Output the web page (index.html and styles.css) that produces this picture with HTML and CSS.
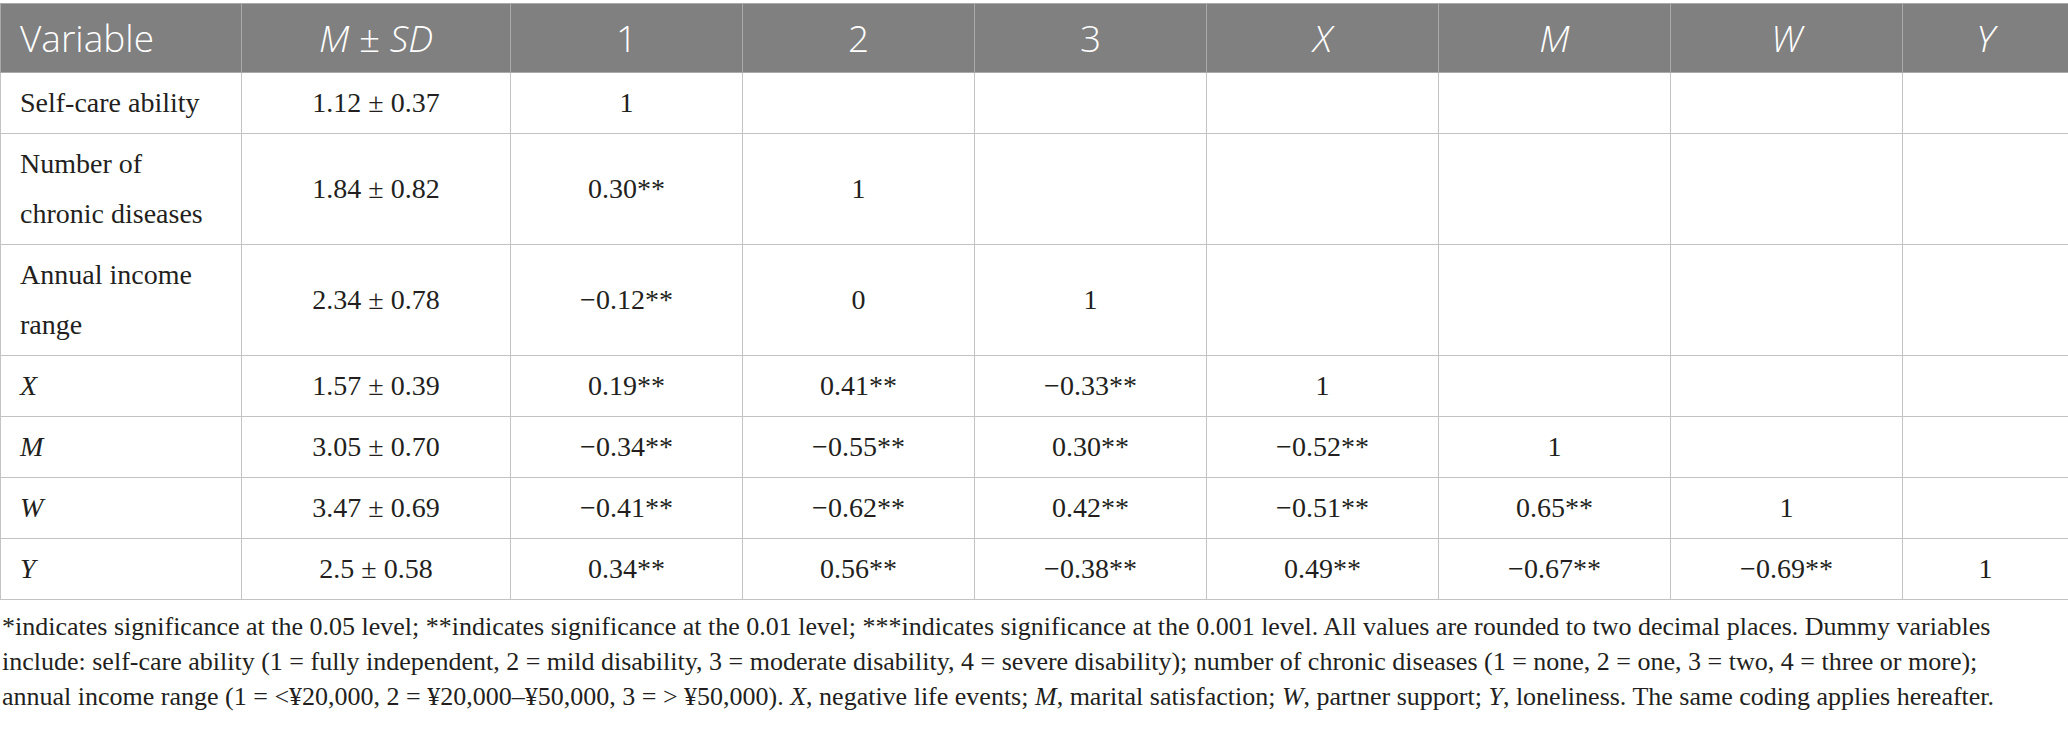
FILE: index.html
```html
<!DOCTYPE html>
<html lang="en">
<head>
<meta charset="utf-8">
<title>Correlation table</title>
<link rel="stylesheet" href="styles.css">
</head>
<body>
<div class="page">
  <table class="data">
    <colgroup>
      <col class="c-var"><col class="c-msd"><col class="c-n"><col class="c-n"><col class="c-n"><col class="c-n"><col class="c-n"><col class="c-n"><col class="c-last">
    </colgroup>
    <thead>
      <tr>
        <th class="left">Variable</th>
        <th><i>M</i> <span class="pm">±</span> <i>SD</i></th>
        <th>1</th>
        <th>2</th>
        <th>3</th>
        <th><i>X</i></th>
        <th><i>M</i></th>
        <th><i>W</i></th>
        <th><i>Y</i></th>
      </tr>
    </thead>
    <tbody>
      <tr>
        <td class="left">Self-care ability</td>
        <td>1.12 ± 0.37</td>
        <td>1</td><td></td><td></td><td></td><td></td><td></td><td></td>
      </tr>
      <tr>
        <td class="left">Number of<br>chronic diseases</td>
        <td>1.84 ± 0.82</td>
        <td>0.30**</td><td>1</td><td></td><td></td><td></td><td></td><td></td>
      </tr>
      <tr>
        <td class="left">Annual income<br>range</td>
        <td>2.34 ± 0.78</td>
        <td>−0.12**</td><td>0</td><td>1</td><td></td><td></td><td></td><td></td>
      </tr>
      <tr>
        <td class="left"><i>X</i></td>
        <td>1.57 ± 0.39</td>
        <td>0.19**</td><td>0.41**</td><td>−0.33**</td><td>1</td><td></td><td></td><td></td>
      </tr>
      <tr>
        <td class="left"><i>M</i></td>
        <td>3.05 ± 0.70</td>
        <td>−0.34**</td><td>−0.55**</td><td>0.30**</td><td>−0.52**</td><td>1</td><td></td><td></td>
      </tr>
      <tr>
        <td class="left"><i>W</i></td>
        <td>3.47 ± 0.69</td>
        <td>−0.41**</td><td>−0.62**</td><td>0.42**</td><td>−0.51**</td><td>0.65**</td><td>1</td><td></td>
      </tr>
      <tr>
        <td class="left"><i>Y</i></td>
        <td>2.5 ± 0.58</td>
        <td>0.34**</td><td>0.56**</td><td>−0.38**</td><td>0.49**</td><td>−0.67**</td><td>−0.69**</td><td>1</td>
      </tr>
    </tbody>
  </table>
  <p class="note">*indicates significance at the 0.05 level; **indicates significance at the 0.01 level; ***indicates significance at the 0.001 level. All values are rounded to two decimal places. Dummy variables<br>include: self-care ability (1 = fully independent, 2 = mild disability, 3 = moderate disability, 4 = severe disability); number of chronic diseases (1 = none, 2 = one, 3 = two, 4 = three or more);<br>annual income range (1 = &lt;¥20,000, 2 = ¥20,000–¥50,000, 3 = &gt; ¥50,000). <i>X</i>, negative life events; <i>M</i>, marital satisfaction; <i>W</i>, partner support; <i>Y</i>, loneliness. The same coding applies hereafter.</p>
</div>
</body>
</html>
```

FILE: styles.css
```css
html, body {
  margin: 0;
  padding: 0;
  background: #ffffff;
}

.page {
  padding-top: 3px;
  width: 2068px;
}

.data {
  border-collapse: collapse;
  table-layout: fixed;
  width: 2068px;
  font-family: "Liberation Serif", "Times New Roman", serif;
  font-size: 28px;
  color: #231f20;
}

.c-var { width: 241px; }
.c-msd { width: 269px; }
.c-n { width: 232px; }
.c-last { width: 166px; }

.data th {
  background: #7f807f;
  color: #ffffff;
  font-family: "Open Sans", "Noto Sans", sans-serif;
  font-weight: 300;
  font-size: 37px;
  line-height: 58px;
  padding: 5px 8px;
  text-align: center;
  border: 1px solid #a9aaa9;
  white-space: nowrap;
}

.data th i {
  font-style: italic;
}

.data th .pm {
  font-style: normal;
}

.data td {
  line-height: 50px;
  padding: 5px 8px;
  text-align: center;
  vertical-align: middle;
  border: 1px solid #c3c3c3;
}

.data th.left,
.data td.left {
  text-align: left;
  padding-left: 19px;
}

.note {
  margin: 9px 0 0 0;
  padding: 0 2px 0 2px;
  font-family: "Liberation Serif", "Times New Roman", serif;
  font-size: 26px;
  line-height: 35px;
  color: #231f20;
  white-space: nowrap;
}
```
